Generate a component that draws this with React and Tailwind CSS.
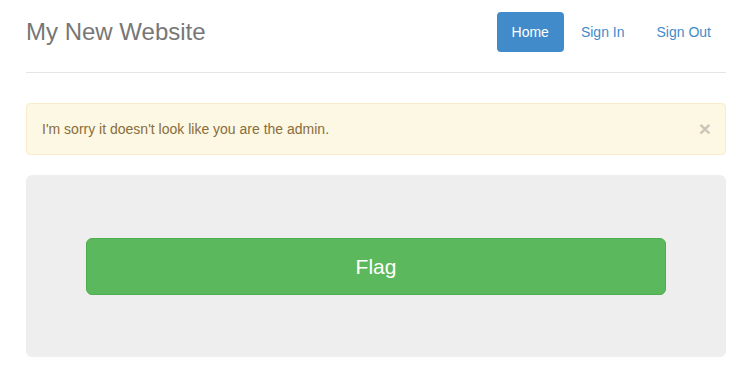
export default function App() {
  return (
    <div className="min-h-[377px] bg-white" style={{ fontFamily: '"Liberation Sans", Arial, sans-serif' }}>
      <div className="ml-[26px] w-[700px] pt-3">
        <div className="flex items-center justify-between border-b border-[#e5e5e5] pb-5">
          <h3 className="m-0 text-[24px] leading-[40px] text-[#777]">My New Website</h3>
          <nav className="flex items-center gap-[2px]">
            <a className="block rounded-[4px] bg-[#428bca] px-[15px] py-[10px] text-[14px] leading-[20px] text-white">Home</a>
            <a className="block rounded-[4px] px-[15px] py-[10px] text-[14px] leading-[20px] text-[#428bca]">Sign In</a>
            <a className="block rounded-[4px] px-[15px] py-[10px] text-[14px] leading-[20px] text-[#428bca]">Sign Out</a>
          </nav>
        </div>
        <div className="mt-[30px] flex items-center justify-between rounded-[4px] border border-[#faebcc] bg-[#fcf8e3] px-[15px] py-[15px] text-[14px] leading-[20px] text-[#8a6d3b]">
          <span>I'm sorry it doesn't look like you are the admin.</span>
          <span className="-mr-[1px] text-[21px] font-bold leading-[20px] text-black opacity-20">×</span>
        </div>
        <div className="mt-5 rounded-[6px] bg-[#eeeeee] px-[60px] pt-[63px] pb-[62px]">
          <button className="block h-[57px] w-full rounded-[6px] border border-[#4cae4c] bg-[#5cb85c] text-[21px] leading-[28px] text-white">
            Flag
          </button>
        </div>
      </div>
    </div>
  );
}
